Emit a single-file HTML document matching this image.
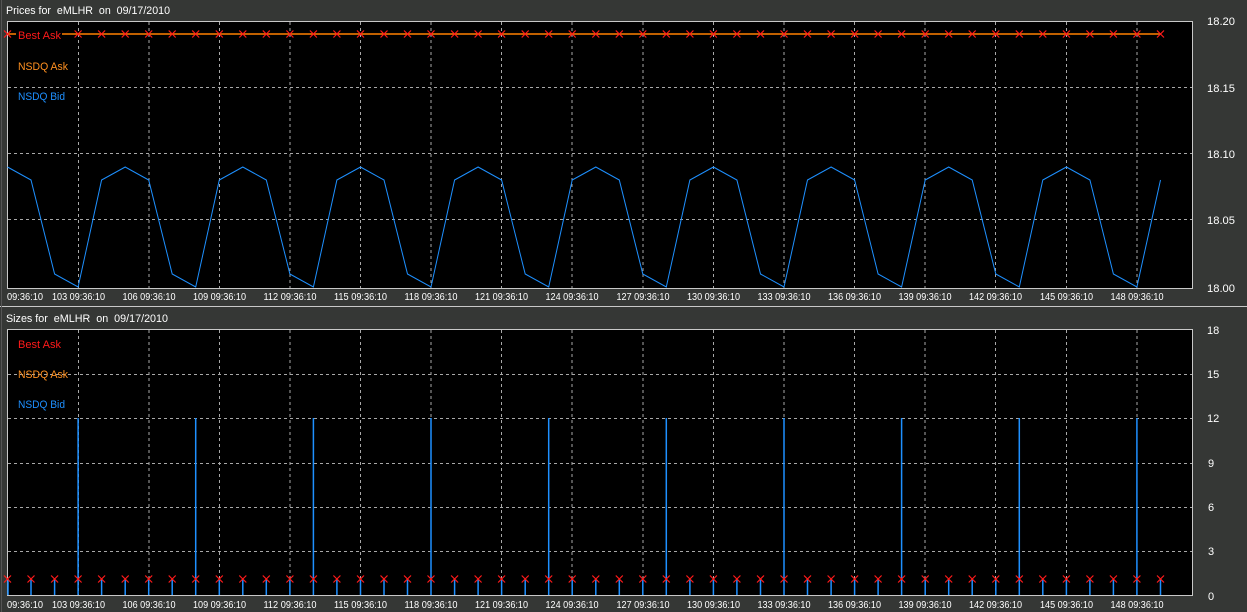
<!DOCTYPE html>
<html><head><meta charset="utf-8">
<style>
html,body{margin:0;padding:0;background:#353735;}
svg{display:block;}
text{font-family:"Liberation Sans",sans-serif;}
</style></head>
<body>
<svg width="1247" height="612" viewBox="0 0 1247 612" xmlns="http://www.w3.org/2000/svg">
<defs>
<g id="mx" stroke="#ff1a1a" stroke-width="1.2" fill="none"><path d="M-3.5,-3.5L3.5,3.5M3.5,-3.5L-3.5,3.5"/></g>
</defs>
<rect width="1247" height="612" fill="#353735"/>
<line x1="0" y1="306.5" x2="1247" y2="306.5" stroke="#c8c8c8" stroke-width="1"/>
<line x1="1.5" y1="0" x2="1.5" y2="612" stroke="#555" stroke-width="1"/>

<text x="6" y="14" fill="#fff" font-size="11" textLength="164" lengthAdjust="spacingAndGlyphs" xml:space="preserve">Prices for  eMLHR  on  09/17/2010</text>
<text x="6" y="322" fill="#fff" font-size="11" textLength="162" lengthAdjust="spacingAndGlyphs" xml:space="preserve">Sizes for  eMLHR  on  09/17/2010</text>

<rect x="7.5" y="21.5" width="1185" height="267" fill="#000" stroke="#c8c8c8" stroke-width="1"/>
<rect x="7.5" y="329.5" width="1185" height="266" fill="#000" stroke="#c8c8c8" stroke-width="1"/>

<g stroke="#a8a8a8" stroke-width="1" stroke-dasharray="3,3">
<path d="M8,87.5H1192M8,153.5H1192M8,219.5H1192"/>
<path d="M8,374.5H1192M8,418.5H1192M8,463.5H1192M8,507.5H1192M8,551.5H1192"/>
<path d="M78.5,22V288M149,22V288M219.5,22V288M290,22V288M360.5,22V288M431,22V288M501.5,22V288M572,22V288M643,22V288M713.5,22V288M784,22V288M854.5,22V288M925,22V288M995.5,22V288M1066.5,22V288M1137,22V288"/>
<path d="M78.5,330V595M149,330V595M219.5,330V595M290,330V595M360.5,330V595M431,330V595M501.5,330V595M572,330V595M643,330V595M713.5,330V595M784,330V595M854.5,330V595M925,330V595M995.5,330V595M1066.5,330V595M1137,330V595"/>
</g>

<g fill="#fff" font-size="11">
<text x="1207" y="25" textLength="28" lengthAdjust="spacingAndGlyphs">18.20</text>
<text x="1207" y="92" textLength="28" lengthAdjust="spacingAndGlyphs">18.15</text>
<text x="1207" y="158" textLength="28" lengthAdjust="spacingAndGlyphs">18.10</text>
<text x="1207" y="224" textLength="28" lengthAdjust="spacingAndGlyphs">18.05</text>
<text x="1207" y="292" textLength="28" lengthAdjust="spacingAndGlyphs">18.00</text>
<text x="1207" y="334">18</text>
<text x="1207" y="378">15</text>
<text x="1207" y="422">12</text>
<text x="1208" y="467">9</text>
<text x="1208" y="511">6</text>
<text x="1208" y="555">3</text>
<text x="1208" y="600">0</text>
</g>

<line x1="8" y1="34" x2="1161" y2="34" stroke="#ff8000" stroke-width="1.5"/>

<polyline fill="none" stroke="#1e90ff" stroke-width="1" points="7.5,167 31,180 54.6,274 78.1,287 101.6,180 125.2,167 148.7,180 172.2,274 195.7,287 219.3,180 242.8,167 266.3,180 289.9,274 313.4,287 336.9,180 360.5,167 384,180 407.5,274 431,287 454.6,180 478.1,167 501.6,180 525.2,274 548.7,287 572.2,180 595.8,167 619.3,180 642.8,274 666.3,287 689.9,180 713.4,167 736.9,180 760.5,274 784,287 807.5,180 831.1,167 854.6,180 878.1,274 901.6,287 925.2,180 948.7,167 972.2,180 995.8,274 1019.3,287 1042.8,180 1066.4,167 1089.9,180 1113.4,274 1136.9,287 1160.5,180"/>

<g stroke="#1e90ff" stroke-width="1.5">
<path d="M31,579V595M54.6,579V595M101.6,579V595M125.2,579V595M148.7,579V595M172.2,579V595M219.3,579V595M242.8,579V595M266.3,579V595M289.9,579V595M336.9,579V595M360.5,579V595M384,579V595M407.5,579V595M454.6,579V595M478.1,579V595M501.6,579V595M525.2,579V595M572.2,579V595M595.8,579V595M619.3,579V595M642.8,579V595M689.9,579V595M713.4,579V595M736.9,579V595M760.5,579V595M807.5,579V595M831.1,579V595M854.6,579V595M878.1,579V595M925.2,579V595M948.7,579V595M972.2,579V595M995.8,579V595M1042.8,579V595M1066.4,579V595M1089.9,579V595M1113.4,579V595M1160.5,579V595"/>
<path d="M78.1,418V595M195.7,418V595M313.4,418V595M431,418V595M548.7,418V595M666.3,418V595M784,418V595M901.6,418V595M1019.3,418V595M1136.9,418V595"/>
<path d="M8,579V595"/>
</g>

<g>
<use href="#mx" x="7.5" y="34"/><use href="#mx" x="31" y="34"/><use href="#mx" x="54.6" y="34"/><use href="#mx" x="78.1" y="34"/><use href="#mx" x="101.6" y="34"/><use href="#mx" x="125.2" y="34"/><use href="#mx" x="148.7" y="34"/><use href="#mx" x="172.2" y="34"/><use href="#mx" x="195.7" y="34"/><use href="#mx" x="219.3" y="34"/><use href="#mx" x="242.8" y="34"/><use href="#mx" x="266.3" y="34"/><use href="#mx" x="289.9" y="34"/><use href="#mx" x="313.4" y="34"/><use href="#mx" x="336.9" y="34"/><use href="#mx" x="360.5" y="34"/><use href="#mx" x="384" y="34"/><use href="#mx" x="407.5" y="34"/><use href="#mx" x="431" y="34"/><use href="#mx" x="454.6" y="34"/><use href="#mx" x="478.1" y="34"/><use href="#mx" x="501.6" y="34"/><use href="#mx" x="525.2" y="34"/><use href="#mx" x="548.7" y="34"/><use href="#mx" x="572.2" y="34"/><use href="#mx" x="595.8" y="34"/><use href="#mx" x="619.3" y="34"/><use href="#mx" x="642.8" y="34"/><use href="#mx" x="666.3" y="34"/><use href="#mx" x="689.9" y="34"/><use href="#mx" x="713.4" y="34"/><use href="#mx" x="736.9" y="34"/><use href="#mx" x="760.5" y="34"/><use href="#mx" x="784" y="34"/><use href="#mx" x="807.5" y="34"/><use href="#mx" x="831.1" y="34"/><use href="#mx" x="854.6" y="34"/><use href="#mx" x="878.1" y="34"/><use href="#mx" x="901.6" y="34"/><use href="#mx" x="925.2" y="34"/><use href="#mx" x="948.7" y="34"/><use href="#mx" x="972.2" y="34"/><use href="#mx" x="995.8" y="34"/><use href="#mx" x="1019.3" y="34"/><use href="#mx" x="1042.8" y="34"/><use href="#mx" x="1066.4" y="34"/><use href="#mx" x="1089.9" y="34"/><use href="#mx" x="1113.4" y="34"/><use href="#mx" x="1136.9" y="34"/><use href="#mx" x="1160.5" y="34"/>
</g>
<g>
<use href="#mx" x="7.5" y="579"/><use href="#mx" x="31" y="579"/><use href="#mx" x="54.6" y="579"/><use href="#mx" x="78.1" y="579"/><use href="#mx" x="101.6" y="579"/><use href="#mx" x="125.2" y="579"/><use href="#mx" x="148.7" y="579"/><use href="#mx" x="172.2" y="579"/><use href="#mx" x="195.7" y="579"/><use href="#mx" x="219.3" y="579"/><use href="#mx" x="242.8" y="579"/><use href="#mx" x="266.3" y="579"/><use href="#mx" x="289.9" y="579"/><use href="#mx" x="313.4" y="579"/><use href="#mx" x="336.9" y="579"/><use href="#mx" x="360.5" y="579"/><use href="#mx" x="384" y="579"/><use href="#mx" x="407.5" y="579"/><use href="#mx" x="431" y="579"/><use href="#mx" x="454.6" y="579"/><use href="#mx" x="478.1" y="579"/><use href="#mx" x="501.6" y="579"/><use href="#mx" x="525.2" y="579"/><use href="#mx" x="548.7" y="579"/><use href="#mx" x="572.2" y="579"/><use href="#mx" x="595.8" y="579"/><use href="#mx" x="619.3" y="579"/><use href="#mx" x="642.8" y="579"/><use href="#mx" x="666.3" y="579"/><use href="#mx" x="689.9" y="579"/><use href="#mx" x="713.4" y="579"/><use href="#mx" x="736.9" y="579"/><use href="#mx" x="760.5" y="579"/><use href="#mx" x="784" y="579"/><use href="#mx" x="807.5" y="579"/><use href="#mx" x="831.1" y="579"/><use href="#mx" x="854.6" y="579"/><use href="#mx" x="878.1" y="579"/><use href="#mx" x="901.6" y="579"/><use href="#mx" x="925.2" y="579"/><use href="#mx" x="948.7" y="579"/><use href="#mx" x="972.2" y="579"/><use href="#mx" x="995.8" y="579"/><use href="#mx" x="1019.3" y="579"/><use href="#mx" x="1042.8" y="579"/><use href="#mx" x="1066.4" y="579"/><use href="#mx" x="1089.9" y="579"/><use href="#mx" x="1113.4" y="579"/><use href="#mx" x="1136.9" y="579"/><use href="#mx" x="1160.5" y="579"/>
</g>

<g font-size="11">
<rect x="16" y="28" width="46" height="12" fill="#000"/>
<text x="18" y="39" fill="#ff1a1a" textLength="43" lengthAdjust="spacingAndGlyphs">Best Ask</text>
<text x="18" y="70" fill="#ff9020" textLength="50" lengthAdjust="spacingAndGlyphs">NSDQ Ask</text>
<text x="18" y="100" fill="#1e90ff" textLength="47" lengthAdjust="spacingAndGlyphs">NSDQ Bid</text>
<text x="18" y="348" fill="#ff1a1a" textLength="43" lengthAdjust="spacingAndGlyphs">Best Ask</text>
<text x="18" y="378" fill="#ff9020" textLength="50" lengthAdjust="spacingAndGlyphs">NSDQ Ask</text>
<text x="18" y="408" fill="#1e90ff" textLength="47" lengthAdjust="spacingAndGlyphs">NSDQ Bid</text>
</g>

<g fill="#fff" font-size="10" text-anchor="middle">
<text x="7" y="300" text-anchor="start" textLength="36" lengthAdjust="spacingAndGlyphs">09:36:10</text>
<text x="78.5" y="300" textLength="53" lengthAdjust="spacingAndGlyphs">103 09:36:10</text>
<text x="149" y="300" textLength="53" lengthAdjust="spacingAndGlyphs">106 09:36:10</text>
<text x="219.5" y="300" textLength="53" lengthAdjust="spacingAndGlyphs">109 09:36:10</text>
<text x="290" y="300" textLength="53" lengthAdjust="spacingAndGlyphs">112 09:36:10</text>
<text x="360.5" y="300" textLength="53" lengthAdjust="spacingAndGlyphs">115 09:36:10</text>
<text x="431" y="300" textLength="53" lengthAdjust="spacingAndGlyphs">118 09:36:10</text>
<text x="501.5" y="300" textLength="53" lengthAdjust="spacingAndGlyphs">121 09:36:10</text>
<text x="572" y="300" textLength="53" lengthAdjust="spacingAndGlyphs">124 09:36:10</text>
<text x="643" y="300" textLength="53" lengthAdjust="spacingAndGlyphs">127 09:36:10</text>
<text x="713.5" y="300" textLength="53" lengthAdjust="spacingAndGlyphs">130 09:36:10</text>
<text x="784" y="300" textLength="53" lengthAdjust="spacingAndGlyphs">133 09:36:10</text>
<text x="854.5" y="300" textLength="53" lengthAdjust="spacingAndGlyphs">136 09:36:10</text>
<text x="925" y="300" textLength="53" lengthAdjust="spacingAndGlyphs">139 09:36:10</text>
<text x="995.5" y="300" textLength="53" lengthAdjust="spacingAndGlyphs">142 09:36:10</text>
<text x="1066.5" y="300" textLength="53" lengthAdjust="spacingAndGlyphs">145 09:36:10</text>
<text x="1137" y="300" textLength="53" lengthAdjust="spacingAndGlyphs">148 09:36:10</text>
</g>
<g fill="#fff" font-size="10" text-anchor="middle">
<text x="7" y="608" text-anchor="start" textLength="36" lengthAdjust="spacingAndGlyphs">09:36:10</text>
<text x="78.5" y="608" textLength="53" lengthAdjust="spacingAndGlyphs">103 09:36:10</text>
<text x="149" y="608" textLength="53" lengthAdjust="spacingAndGlyphs">106 09:36:10</text>
<text x="219.5" y="608" textLength="53" lengthAdjust="spacingAndGlyphs">109 09:36:10</text>
<text x="290" y="608" textLength="53" lengthAdjust="spacingAndGlyphs">112 09:36:10</text>
<text x="360.5" y="608" textLength="53" lengthAdjust="spacingAndGlyphs">115 09:36:10</text>
<text x="431" y="608" textLength="53" lengthAdjust="spacingAndGlyphs">118 09:36:10</text>
<text x="501.5" y="608" textLength="53" lengthAdjust="spacingAndGlyphs">121 09:36:10</text>
<text x="572" y="608" textLength="53" lengthAdjust="spacingAndGlyphs">124 09:36:10</text>
<text x="643" y="608" textLength="53" lengthAdjust="spacingAndGlyphs">127 09:36:10</text>
<text x="713.5" y="608" textLength="53" lengthAdjust="spacingAndGlyphs">130 09:36:10</text>
<text x="784" y="608" textLength="53" lengthAdjust="spacingAndGlyphs">133 09:36:10</text>
<text x="854.5" y="608" textLength="53" lengthAdjust="spacingAndGlyphs">136 09:36:10</text>
<text x="925" y="608" textLength="53" lengthAdjust="spacingAndGlyphs">139 09:36:10</text>
<text x="995.5" y="608" textLength="53" lengthAdjust="spacingAndGlyphs">142 09:36:10</text>
<text x="1066.5" y="608" textLength="53" lengthAdjust="spacingAndGlyphs">145 09:36:10</text>
<text x="1137" y="608" textLength="53" lengthAdjust="spacingAndGlyphs">148 09:36:10</text>
</g>
</svg>
</body></html>
